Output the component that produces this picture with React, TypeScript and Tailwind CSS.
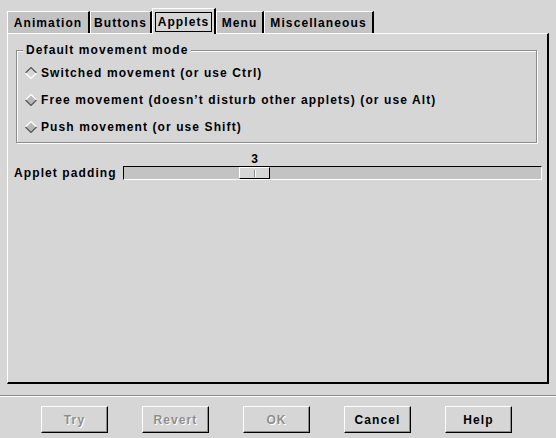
import React from "react";

const font = "font-['Liberation_Sans',_Arial,_sans-serif] font-bold text-[12px] tracking-[1.1px]";

function Diamond({ selected }: { selected?: boolean }) {
  return (
    <svg width="12" height="12" viewBox="0 0 12 12" className="shrink-0">
      <polygon points="6,0.5 11.5,6 6,11.5 0.5,6" fill={selected ? "#d6d6d6" : "#b8b8b8"} />
      <path d="M0.5 6 L6 0.5 L11.5 6" fill="none" stroke={selected ? "#555" : "#fff"} strokeWidth="1.2" />
      <path d="M0.5 6 L6 11.5 L11.5 6" fill="none" stroke={selected ? "#fff" : "#555"} strokeWidth="1.2" />
    </svg>
  );
}

function Tab({ label, w, selected }: { label: string; w: string; selected?: boolean }) {
  if (selected) {
    return (
      <div className={`${w} h-[26px] -mb-px relative z-10 bg-[#d6d6d6] border-l border-t border-white border-r-2 border-r-black flex items-center justify-center`}>
        <span className="border border-black px-[2px] h-[20px] leading-[18px] mt-[1px]">{label}</span>
      </div>
    );
  }
  return (
    <div className={`${w} h-[22px] bg-[#c3c3c3] border-l border-t border-white border-r-2 border-r-black flex items-center justify-center`}>
      {label}
    </div>
  );
}

function Btn({ label, disabled }: { label: string; disabled?: boolean }) {
  return (
    <div
      className={`w-[67px] h-[27px] border-l border-t border-white border-r border-b border-r-black border-b-black shadow-[inset_-1px_-1px_0_#8c8c8c] flex items-center justify-center ${
        disabled ? "text-[#8e8e8e] [text-shadow:1px_1px_0_#fff]" : "text-black"
      }`}
    >
      {label}
    </div>
  );
}

export default function App() {
  return (
    <div className={`w-[556px] h-[438px] bg-[#d6d6d6] flex flex-col text-black whitespace-nowrap ${font}`}>
      <div className="flex items-end pl-[7px] h-[33px]">
        <Tab label="Animation" w="w-[83px]" />
        <Tab label="Buttons" w="w-[62px]" />
        <Tab label="Applets" w="w-[64px]" selected />
        <Tab label="Menu" w="w-[48px]" />
        <Tab label="Miscellaneous" w="w-[110px]" />
      </div>
      <div className="mx-[7px] h-[351px] border-l border-t border-white border-r-2 border-b-2 border-r-black border-b-black flex flex-col">
        <div className="relative mt-[16px] ml-[8px] mr-[10px] h-[93px] border border-[#8c8c8c] shadow-[inset_1px_1px_0_#fff,1px_1px_0_#fff] flex flex-col pt-[8px] pl-[8px]">
          <span className="absolute -top-[9px] left-[6px] bg-[#d6d6d6] px-[3px] leading-[16px]">Default movement mode</span>
          <div className="h-[27px] flex items-center gap-[4px]">
            <Diamond selected />
            <span>Switched movement (or use Ctrl)</span>
          </div>
          <div className="h-[27px] flex items-center gap-[4px]">
            <Diamond />
            <span>Free movement (doesn’t disturb other applets) (or use Alt)</span>
          </div>
          <div className="h-[27px] flex items-center gap-[4px]">
            <Diamond />
            <span>Push movement (or use Shift)</span>
          </div>
        </div>
        <div className="mt-[21px] flex items-center justify-between pl-[6px] pr-[5px]">
          <span className="shrink-0">Applet padding</span>
          <div className="relative shrink-0 w-[419px] h-[14px] bg-[#c3c3c3] border-t border-l border-black border-b border-r border-b-white border-r-white">
            <div className="absolute left-[115px] top-0 w-[31px] h-[12px] bg-[#d6d6d6] border-l border-t border-white border-r border-b border-r-black border-b-black flex items-center justify-center">
              <div className="w-[1px] h-[7px] bg-[#8c8c8c] shadow-[1px_0_0_#fff]" />
              <span className="absolute -top-[18px] left-0 right-0 text-center tracking-normal">3</span>
            </div>
          </div>
        </div>
      </div>
      <div className="mt-[11px] h-[2px] border-t border-[#8c8c8c] border-b border-b-white" />
      <div className="mt-[9px] flex pl-[41px] gap-[34px]">
        <Btn label="Try" disabled />
        <Btn label="Revert" disabled />
        <Btn label="OK" disabled />
        <Btn label="Cancel" />
        <Btn label="Help" />
      </div>
    </div>
  );
}
